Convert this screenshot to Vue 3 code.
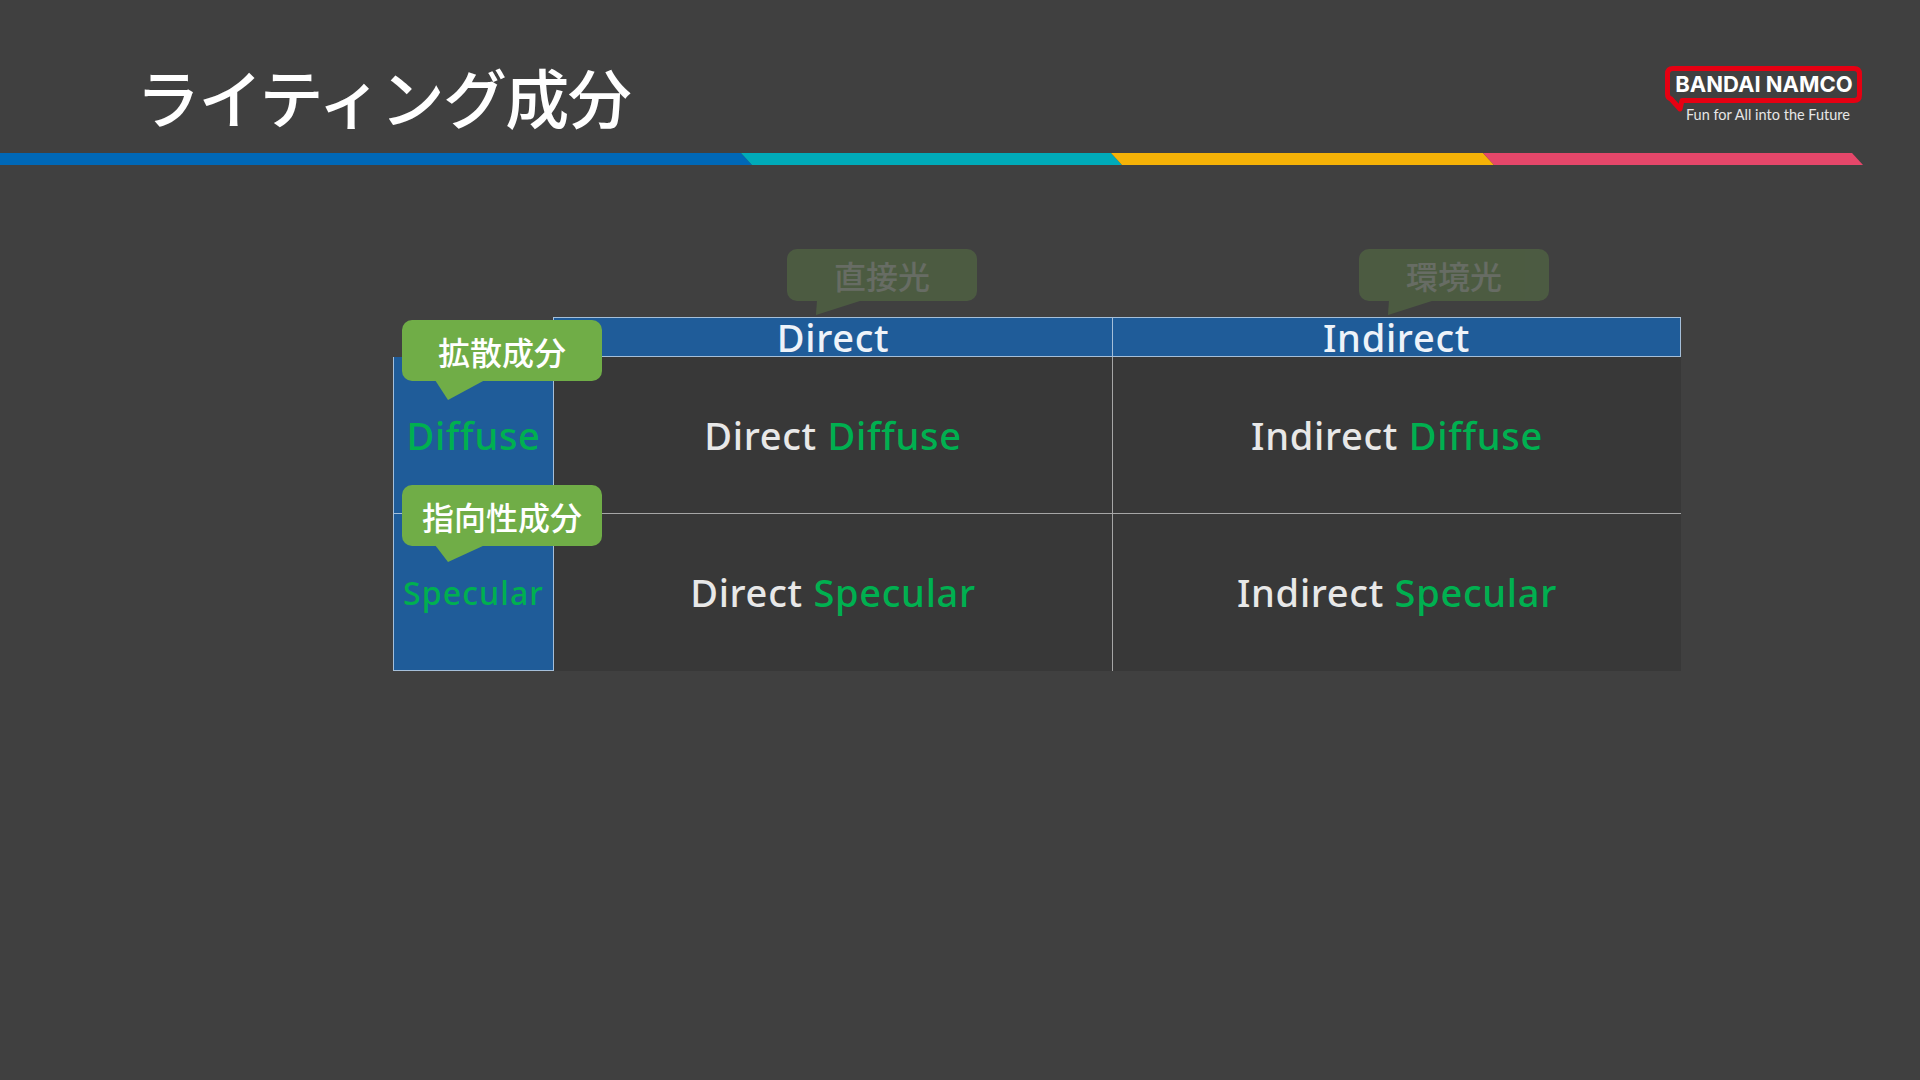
<script setup>
const stripes = [
  { color: '#0068b7', points: '0,153 741,153 752,165 0,165' },
  { color: '#00abb9', points: '741,153 1111,153 1122,165 752,165' },
  { color: '#f5b207', points: '1111,153 1483,153 1494,165 1122,165' },
  { color: '#e5476a', points: '1483,153 1852,153 1863,165 1494,165' },
]
const rows = [
  { head: 'Diffuse', small: false, last: false },
  { head: 'Specular', small: true, last: true },
]
const callouts = [
  { text: '拡散成分', cls: 'c1', tail: '0,0 50,0 13,20' },
  { text: '指向性成分', cls: 'c2', tail: '0,0 50,0 13,17' },
  { text: '直接光', cls: 'c3 faded', tail: '1,0 47,0 0,15' },
  { text: '環境光', cls: 'c4 faded', tail: '1,0 47,0 0,15' },
]
</script>

<template>
  <div class="page">
    <header class="head">
      <h1 class="title">ライティング成分</h1>
      <div class="logo">
        <svg class="logo-frame" width="204" height="52" viewBox="0 0 204 52">
          <path d="M11 4.5 H192 Q197.5 4.5 197.5 10 V31 Q197.5 36.5 192 36.5 H20 L18 45 L9 35 Q5.5 34 5.5 30 V10 Q5.5 4.5 11 4.5 Z" fill="none" stroke="#e60012" stroke-width="5" stroke-linejoin="round" />
        </svg>
        <span class="logo-name">BANDAI NAMCO</span>
        <span class="logo-tag">Fun for All into the Future</span>
      </div>
    </header>
    <svg class="stripe" width="1920" height="12" viewBox="0 153 1920 12">
      <polygon v-for="s in stripes" :key="s.color" :points="s.points" :fill="s.color" />
    </svg>

    <div class="table">
      <div class="corner"></div>
      <div class="th first">Direct</div>
      <div class="th">Indirect</div>
      <template v-for="r in rows" :key="r.head">
        <div class="rh" :class="{ small: r.small }">{{ r.head }}</div>
        <div class="td" :class="{ last: r.last }">Direct <em>{{ r.head }}</em></div>
        <div class="td end" :class="{ last: r.last }">Indirect <em>{{ r.head }}</em></div>
      </template>

      <div v-for="c in callouts" :key="c.text" class="callout" :class="c.cls">
        <svg class="tail" width="60" height="22" viewBox="0 0 60 22"><polygon :points="c.tail" /></svg>
        <span>{{ c.text }}</span>
      </div>
    </div>
  </div>
</template>

<style scoped>
.page {
  width: 1920px;
  height: 1080px;
  background: #404040;
  overflow: hidden;
  font-family: "Noto Sans", "Noto Sans CJK JP", sans-serif;
  color: #fff;
}
.head {
  height: 153px;
  display: flex;
  justify-content: space-between;
  padding-left: 136px;
  padding-right: 54px;
  box-sizing: border-box;
}
.title {
  margin: 50px 0 0;
  font-family: "Noto Sans CJK JP", sans-serif;
  font-size: 64px;
  line-height: 90px;
  font-weight: 500;
  letter-spacing: -1.6px;
}
.logo {
  width: 204px;
  height: 70px;
  margin-top: 64px;
  position: relative;
  display: flex;
  flex-direction: column;
  align-items: center;
}
.logo-frame {
  position: absolute;
  left: 0;
  top: 0;
}
.logo-name {
  position: relative;
  margin-top: 7px;
  font-family: Inter, sans-serif;
  font-size: 22px;
  line-height: 26px;
  font-weight: 700;
  white-space: nowrap;
}
.logo-tag {
  position: relative;
  margin-top: 10px;
  padding-left: 8px;
  font-family: Lato, sans-serif;
  font-size: 14.5px;
  line-height: 16px;
  color: #e6e6e6;
  white-space: nowrap;
}
.stripe {
  display: block;
}
.table {
  position: relative;
  margin: 152px 0 0 393px;
  width: 1288px;
  display: grid;
  grid-template-columns: 161px 559px 568px;
  grid-template-rows: 40px 157px 157px;
  font-size: 38px;
  font-weight: 500;
  letter-spacing: 0.7px;
}
.th {
  background: #1f5c99;
  border: 1px solid #a5bfd9;
  display: flex;
  align-items: center;
  justify-content: center;
  color: #eef3f9;
  box-sizing: border-box;
}
.th.first {
  margin-left: -1px;
}
.th + .th {
  border-left: 0;
}
.rh {
  background: #1f5c99;
  border: 1px solid #a5bfd9;
  border-top: 0;
  box-sizing: border-box;
  color: #00b050;
  display: flex;
  align-items: center;
  justify-content: center;
}
.rh.small {
  font-size: 32px;
  letter-spacing: 1.1px;
}
.td {
  background: #383838;
  color: #e8e8e8;
  border-right: 1px solid #a6a6a6;
  border-bottom: 1px solid #a6a6a6;
  box-sizing: border-box;
  display: flex;
  align-items: center;
  justify-content: center;
  gap: 0.28em;
}
.td.end {
  border-right: 0;
}
.td.last {
  border-bottom: 0;
  padding-bottom: 2px;
}
.td em {
  font-style: normal;
  color: #00b050;
}
.callout {
  position: absolute;
  width: 200px;
  height: 61px;
  border-radius: 10px;
  background: #70ad47;
  color: #fff;
  font-family: "Noto Sans CJK JP", sans-serif;
  font-size: 32px;
  font-weight: 500;
  letter-spacing: 0;
  display: flex;
  align-items: center;
  justify-content: center;
}
.callout span {
  position: relative;
}
.tail {
  position: absolute;
  left: 33px;
  top: 60px;
  fill: #70ad47;
}
.c1 {
  left: 9px;
  top: 3px;
}
.c2 {
  left: 9px;
  top: 168px;
}
.faded {
  width: 190px;
  height: 52px;
  opacity: 0.25;
  color: #dcefcf;
}
.faded .tail {
  left: 29px;
  top: 51px;
}
.c3 {
  left: 394px;
  top: -68px;
}
.c4 {
  left: 966px;
  top: -68px;
}
</style>
